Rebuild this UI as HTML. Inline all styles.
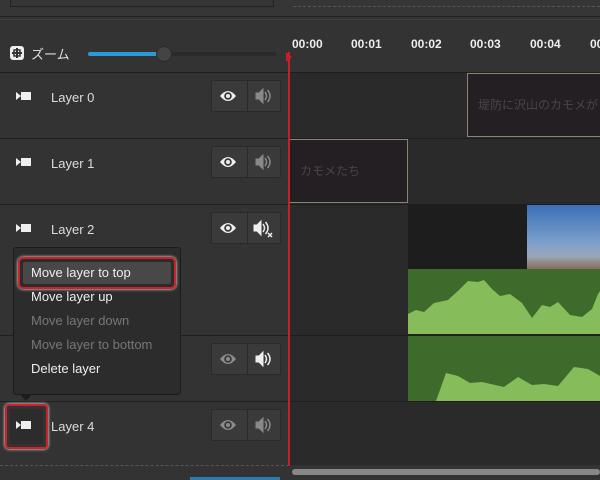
<!DOCTYPE html>
<html><head><meta charset="utf-8"><style>
*{margin:0;padding:0;box-sizing:border-box}
body{width:600px;height:480px;overflow:hidden;background:#333;font-family:"Liberation Sans","Noto Sans CJK JP",sans-serif;position:relative;color:#ddd}
.a{position:absolute}
.lbl{font-size:13px;color:#ddd}
.grp{position:absolute;left:211px;width:70px;height:32px;border:1px solid #2a2a2a;background:#3a3a3a;border-radius:2px}
.grp:after{content:"";position:absolute;left:35px;top:0;bottom:0;width:1px;background:#2a2a2a}
.t{font-size:12px;font-weight:bold;color:#eee;top:37px}
.mi{position:absolute;left:31px;font-size:13px}
</style></head><body>
<div class="a" style="left:0;top:0;width:600px;height:17px;background:#363636;border-bottom:1px solid #222"></div>
<div class="a" style="left:10px;top:0;width:264px;height:7px;border:1px solid #222;border-top:none"></div>
<div class="a" style="left:293px;top:0;width:307px;height:7px;border-bottom:1px dashed #555"></div>
<div class="a" style="left:0;top:19px;width:600px;height:1px;background:#3e3e3e"></div>
<svg class="a" style="left:9px;top:45px" width="16" height="16"><rect x="1" y="1" width="14" height="14" rx="3" fill="#eee"/><path d="M8 3v10M3 8h10" stroke="#333" stroke-width="2"/><rect x="5" y="5" width="6" height="6" fill="none" stroke="#333" stroke-width="1.5"/></svg>
<div class="a lbl" style="left:31px;top:44px">ズーム</div>
<div class="a" style="left:88px;top:52px;width:188px;height:4px;background:#2a2a2a;border-radius:2px"></div>
<div class="a" style="left:88px;top:52px;width:75px;height:4px;background:#2b9ad8;border-radius:2px"></div>
<div class="a" style="left:156px;top:46px;width:16px;height:16px;border-radius:50%;background:#444;border:1px solid #2a2a2a"></div>
<div class="a" style="left:289px;top:72px;width:311px;height:393px;background:#2a2a2a"></div>
<div class="a t" style="left:292px">00:00</div><div class="a t" style="left:351px">00:01</div><div class="a t" style="left:411px">00:02</div><div class="a t" style="left:470px">00:03</div><div class="a t" style="left:530px">00:04</div><div class="a t" style="left:590px">00:05</div>
<div class="a" style="left:0;top:72px;width:600px;height:1px;background:#1e1e1e"></div>
<div class="a" style="left:0;top:138px;width:600px;height:1px;background:#1e1e1e"></div>
<div class="a" style="left:0;top:204px;width:600px;height:1px;background:#1e1e1e"></div>
<div class="a" style="left:0;top:335px;width:600px;height:1px;background:#1e1e1e"></div>
<div class="a" style="left:0;top:401px;width:600px;height:1px;background:#1e1e1e"></div>
<div class="a" style="left:0;top:465px;width:289px;border-top:1px dashed #555"></div>
<div class="a" style="left:467px;top:73px;width:140px;height:64px;background:#231f22;border:1px solid #8a8570;color:#4a4548;font-size:12px;padding:22px 0 0 10px;white-space:nowrap">堤防に沢山のカモメが</div>
<div class="a" style="left:289px;top:139px;width:119px;height:64px;background:#231f22;border:1px solid #8a8570;color:#4a4548;font-size:12px;padding:22px 0 0 10px">カモメたち</div>
<div class="a" style="left:408px;top:205px;width:120px;height:64px;background:#1d1d1d"></div>
<div class="a" style="left:527px;top:205px;width:73px;height:64px;background:linear-gradient(#3a6fb8,#7ea0cc 60%,#9aa8b8 80%,#8a6a5a)"></div>
<svg class="a" style="left:408px;top:269px" width="192" height="132"><rect width="192" height="65" fill="#3e6a2c"/><rect y="67" width="192" height="65" fill="#3e6a2c"/>
<path d="M0 70 0 45 8 41 16 43 26 34 40 31 52 20 60 12 70 13 76 11 84 20 92 27 102 25 114 34 124 49 134 36 142 38 150 33 162 46 174 48 184 40 190 25 192 22 192 65 0 65Z" fill="#86bd5a"/>
<path d="M28 132 38 104 50 107 62 114 74 113 96 118 110 108 124 116 136 115 150 117 166 98 180 100 192 107 192 132Z" fill="#86bd5a"/>
<rect x="0" y="65" width="192" height="2" fill="#222"/></svg>
<div class="a" style="left:288px;top:52px;width:2px;height:414px;background:#c8202a"></div>
<div class="a" style="left:286px;top:52px;width:0;height:0;border-left:6px solid #c8202a;border-top:5px solid transparent;border-bottom:5px solid transparent"></div>
<div class="a" style="left:292px;top:469px;width:308px;height:6px;background:#888;border-radius:3px"></div>
<div class="a" style="left:190px;top:477px;width:90px;height:3px;background:#2b7ab0"></div>
<div class="a lbl" style="left:51px;top:90px">Layer 0</div>
<div class="a lbl" style="left:51px;top:156px">Layer 1</div>
<div class="a lbl" style="left:51px;top:222px">Layer 2</div>
<div class="a lbl" style="left:51px;top:419px">Layer 4</div>
<svg class="a" style="left:16px;top:91px" width="16" height="10"><path d="M0 1l5 4-5 4z M5 1h10v8h-10z" fill="#eee"/></svg>
<svg class="a" style="left:16px;top:157px" width="16" height="10"><path d="M0 1l5 4-5 4z M5 1h10v8h-10z" fill="#eee"/></svg>
<svg class="a" style="left:16px;top:223px" width="16" height="10"><path d="M0 1l5 4-5 4z M5 1h10v8h-10z" fill="#eee"/></svg>
<div class="grp" style="top:80px"></div><div class="grp" style="top:146px"></div><div class="grp" style="top:212px"></div><div class="grp" style="top:343px"></div><div class="grp" style="top:409px"></div>
<svg class="a" style="left:211px;top:80px" width="70" height="360">
<defs><g id="e"><path d="M-8 0Q0-10 8 0Q0 10-8 0Z" fill="#eee"/><circle r="3.8" fill="#3a3a3a"/><circle r="2" fill="#eee"/></g>
<g id="s"><path d="M-7-3h3l4-4v14l-4-4h-3z"/><path d="M2-4q3 4 0 8M4.5-6q5 6 0 12" fill="none" stroke-width="1.5"/></g></defs>
<use href="#e" x="17" y="16"/><use href="#e" x="17" y="82"/><use href="#e" x="17" y="148"/>
<g opacity=".45"><use href="#e" x="17" y="279"/><use href="#e" x="17" y="345"/></g>
<g fill="#888" stroke="#888"><use href="#s" x="52" y="16"/><use href="#s" x="52" y="82"/><use href="#s" x="52" y="345"/></g>
<g fill="#eee" stroke="#eee"><use href="#s" x="50" y="148"/><use href="#s" x="52" y="279"/></g>
<path d="M57 153l4 4M61 153l-4 4" stroke="#eee" stroke-width="1.5"/>
</svg>
<div class="a" style="left:5px;top:404px;width:43px;height:45px;border:2px solid #d0202a;border-radius:4px;box-shadow:0 0 3px #fff"></div>
<div class="a" style="left:10px;top:409px;width:33px;height:35px;background:#2c2c2c"></div>
<svg class="a" style="left:16px;top:420px" width="16" height="10"><path d="M0 1l5 4-5 4z M5 1h10v8h-10z" fill="#eee"/></svg>
<div class="a" style="left:13px;top:247px;width:168px;height:148px;background:#2c2c2c;border:1px solid #1c1c1c;border-radius:3px"></div>
<div class="a" style="left:20px;top:394px;width:0;height:0;border-left:6px solid transparent;border-right:6px solid transparent;border-top:7px solid #1c1c1c"></div>
<div class="a" style="left:18px;top:257px;width:158px;height:32px;border:2px solid #d0202a;border-radius:5px;box-shadow:0 0 3px #fff"></div>
<div class="a" style="left:23px;top:262px;width:148px;height:22px;background:#484848;border-radius:2px"></div>
<div class="mi" style="top:265px;color:#eee">Move layer to top</div>
<div class="mi" style="top:289px;color:#eee">Move layer up</div>
<div class="mi" style="top:313px;color:#777">Move layer down</div>
<div class="mi" style="top:337px;color:#777">Move layer to bottom</div>
<div class="mi" style="top:361px;color:#eee">Delete layer</div>
</body></html>
